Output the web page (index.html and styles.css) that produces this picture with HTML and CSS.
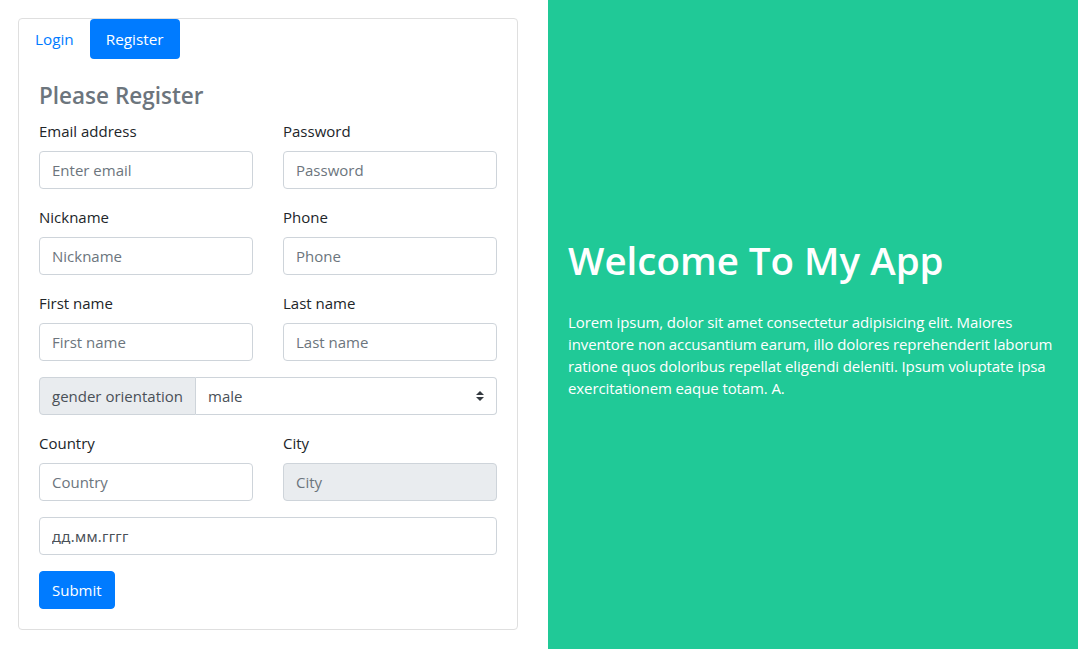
FILE: index.html
```html
<!DOCTYPE html>
<html lang="en">
<head>
<meta charset="utf-8">
<title>Register</title>
<link rel="stylesheet" href="styles.css">
</head>
<body>
<div class="page">
  <div class="left">
    <div class="card">
      <ul class="nav">
        <li><a class="nav-link" href="#">Login</a></li>
        <li><a class="nav-link active" href="#">Register</a></li>
      </ul>
      <div class="card-body">
        <h4 class="title">Please Register</h4>
        <form class="form">
          <div class="row">
            <div class="group">
              <label class="label">Email address</label>
              <input class="control" type="text" placeholder="Enter email">
            </div>
            <div class="group">
              <label class="label">Password</label>
              <input class="control" type="text" placeholder="Password">
            </div>
          </div>
          <div class="row">
            <div class="group">
              <label class="label">Nickname</label>
              <input class="control" type="text" placeholder="Nickname">
            </div>
            <div class="group">
              <label class="label">Phone</label>
              <input class="control" type="text" placeholder="Phone">
            </div>
          </div>
          <div class="row">
            <div class="group">
              <label class="label">First name</label>
              <input class="control" type="text" placeholder="First name">
            </div>
            <div class="group">
              <label class="label">Last name</label>
              <input class="control" type="text" placeholder="Last name">
            </div>
          </div>
          <div class="input-group">
            <span class="prepend">gender orientation</span>
            <div class="select-wrap">
              <select class="select">
                <option>male</option>
                <option>female</option>
              </select>
              <svg class="select-arrow" width="8" height="10" viewBox="0 0 4 5"><path fill="#343a40" d="M2 0L0 2h4zm0 5L0 3h4z"/></svg>
            </div>
          </div>
          <div class="row">
            <div class="group">
              <label class="label">Country</label>
              <input class="control" type="text" placeholder="Country">
            </div>
            <div class="group">
              <label class="label">City</label>
              <input class="control" type="text" placeholder="City" disabled>
            </div>
          </div>
          <div class="group">
            <input class="control date" type="text" value="дд.мм.гггг">
          </div>
          <button class="btn" type="button">Submit</button>
        </form>
      </div>
    </div>
  </div>
  <div class="right">
    <h1 class="hero-title">Welcome To My App</h1>
    <p class="hero-text">Lorem ipsum, dolor sit amet consectetur adipisicing elit. Maiores inventore non accusantium earum, illo dolores reprehenderit laborum ratione quos doloribus repellat eligendi deleniti. Ipsum voluptate ipsa exercitationem eaque totam. A.</p>
  </div>
</div>
</body>
</html>
```
FILE: styles.css
```css
* { box-sizing: border-box; }
html, body { margin: 0; padding: 0; }
body {
  font-family: "Open Sans", "Noto Sans", sans-serif;
  font-size: 15px;
  line-height: 24px;
  color: #212529;
  background: #fff;
}
.page {
  display: flex;
  height: 649px;
}
.left {
  width: 548px;
  padding: 18px;
}
.card {
  width: 500px;
  border: 1px solid #dfdfdf;
  border-radius: 4px;
  background: #fff;
}
.nav {
  display: flex;
  list-style: none;
  margin: 0;
  padding: 0;
}
.nav-link {
  display: block;
  padding: 8px 16px;
  font-size: 15.3px;
  line-height: 24px;
  color: #007bff;
  text-decoration: none;
  border-radius: 4px;
}
.nav-link.active {
  background: #007bff;
  color: #fff;
}
.card-body {
  padding: 20px;
}
.title {
  margin: 2px 0 9px;
  font-size: 22.5px;
  font-weight: 600;
  line-height: 29px;
  color: #6c757d;
}
.form { margin: 0; }
.row {
  display: grid;
  grid-template-columns: 1fr 1fr;
  column-gap: 30px;
}
.group {
  margin-bottom: 16px;
}
.label {
  display: block;
  margin-bottom: 8px;
  line-height: 24px;
}
.control {
  display: block;
  width: 100%;
  height: 38px;
  padding: 6px 12px;
  font-family: inherit;
  font-size: 15px;
  line-height: 24px;
  color: #495057;
  background: #fff;
  border: 1px solid #ced4da;
  border-radius: 4px;
  outline: none;
}
.control::placeholder {
  color: #6c757d;
  opacity: 1;
}
.control:disabled {
  background: #e9ecef;
}
.date {
  font-family: "Noto Sans", "Open Sans", sans-serif;
  font-size: 14.5px;
  letter-spacing: 0.3px;
}
.input-group {
  display: flex;
  margin-bottom: 16px;
  height: 38px;
}
.prepend {
  display: flex;
  align-items: center;
  padding: 6px 12px;
  color: #495057;
  background: #e9ecef;
  border: 1px solid #ced4da;
  border-radius: 4px 0 0 4px;
  white-space: nowrap;
}
.select-wrap {
  position: relative;
  flex: 1;
}
.select {
  display: block;
  width: 100%;
  height: 38px;
  padding: 6px 28px 6px 12px;
  font-family: inherit;
  font-size: 15px;
  line-height: 24px;
  color: #495057;
  background: #fff;
  border: 1px solid #ced4da;
  border-left: 0;
  border-radius: 0 4px 4px 0;
  appearance: none;
  -webkit-appearance: none;
  outline: none;
}
.select-arrow {
  position: absolute;
  right: 13px;
  top: 14px;
  pointer-events: none;
}
.btn {
  display: block;
  height: 38px;
  padding: 6px 12px;
  font-family: inherit;
  font-size: 15px;
  line-height: 24px;
  color: #fff;
  background: #007bff;
  border: 1px solid #007bff;
  border-radius: 4px;
}
.right {
  flex: 1;
  background: #20c997;
  color: #fff;
  display: flex;
  flex-direction: column;
  justify-content: center;
  padding: 0 14px 0 20px;
}
.hero-title {
  margin: 2px 0 27px;
  font-size: 38.5px;
  font-weight: 600;
  line-height: 48px;
}
.hero-text {
  margin: 0 0 16px;
  font-size: 15px;
  line-height: 22px;
  letter-spacing: -0.1px;
}
```
